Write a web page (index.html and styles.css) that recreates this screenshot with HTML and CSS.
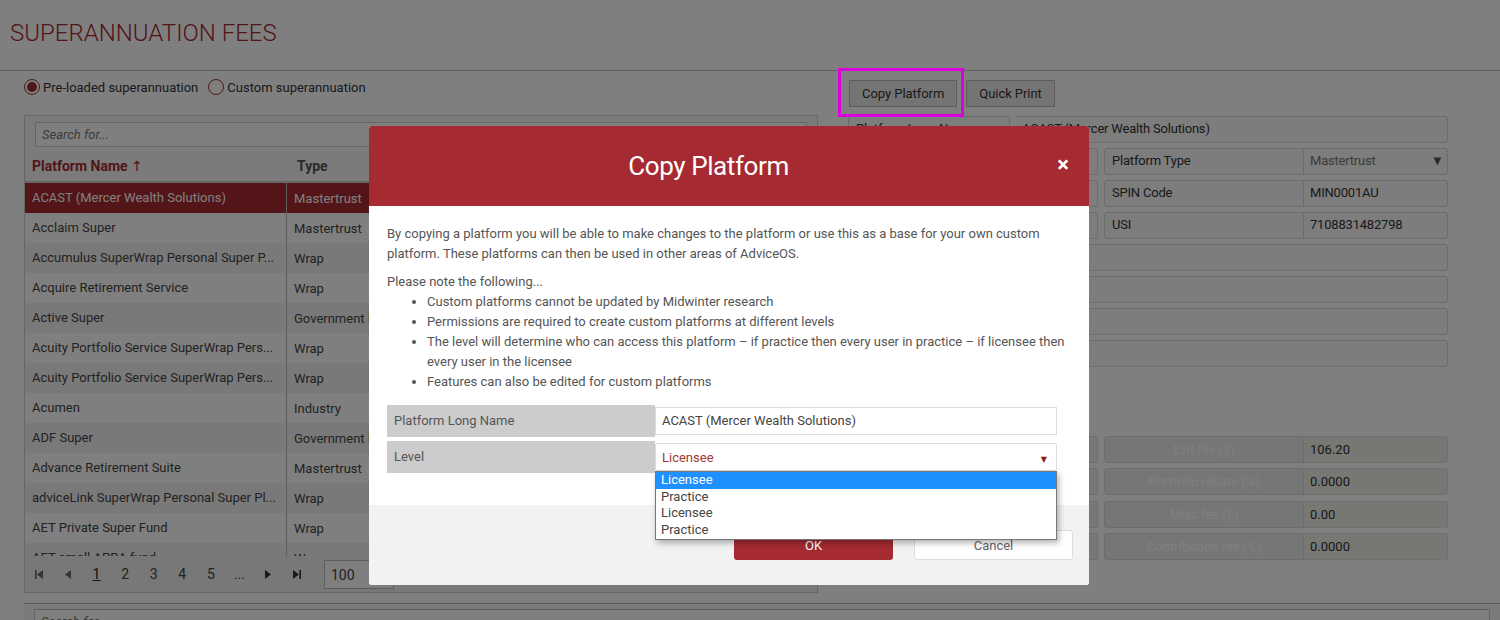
FILE: index.html
```html
<!DOCTYPE html>
<html>
<head>
<meta charset="utf-8">
<link rel="stylesheet" href="styles.css">
</head>
<body>
<div class="page">
  <header class="page-head"><h1>SUPERANNUATION FEES</h1></header>
  <div class="content">
    <div class="left">
      <div class="radios">
        <label class="radio on"><span class="dot"></span>Pre-loaded superannuation</label>
        <label class="radio"><span class="dot"></span>Custom superannuation</label>
      </div>
      <div class="grid">
        <div class="grid-search"><div class="search">Search for...</div></div>
        <div class="grid-head">
          <div class="c1">Platform Name <span class="arrow">↑</span></div>
          <div class="c2">Type</div>
        </div>
        <div class="grid-body">
          <div class="row sel"><div class="c1">ACAST (Mercer Wealth Solutions)</div><div class="c2">Mastertrust</div></div>
          <div class="row"><div class="c1">Acclaim Super</div><div class="c2">Mastertrust</div></div>
          <div class="row alt"><div class="c1">Accumulus SuperWrap Personal Super P...</div><div class="c2">Wrap</div></div>
          <div class="row"><div class="c1">Acquire Retirement Service</div><div class="c2">Wrap</div></div>
          <div class="row alt"><div class="c1">Active Super</div><div class="c2">Government Industry</div></div>
          <div class="row"><div class="c1">Acuity Portfolio Service SuperWrap Pers...</div><div class="c2">Wrap</div></div>
          <div class="row alt"><div class="c1">Acuity Portfolio Service SuperWrap Pers...</div><div class="c2">Wrap</div></div>
          <div class="row"><div class="c1">Acumen</div><div class="c2">Industry</div></div>
          <div class="row alt"><div class="c1">ADF Super</div><div class="c2">Government Industry</div></div>
          <div class="row"><div class="c1">Advance Retirement Suite</div><div class="c2">Mastertrust</div></div>
          <div class="row alt"><div class="c1">adviceLink SuperWrap Personal Super Pl...</div><div class="c2">Wrap</div></div>
          <div class="row"><div class="c1">AET Private Super Fund</div><div class="c2">Wrap</div></div>
          <div class="row alt"><div class="c1">AET small APRA fund</div><div class="c2">Wrap</div></div>
        </div>
        <div class="pager">
          <span class="pg-ico"><svg width="9" height="9" viewBox="0 0 9 9"><rect x="0" y="0" width="1.6" height="9" fill="#666"/><path d="M8 0 L2 4.5 L8 9 Z" fill="#666"/></svg></span>
          <span class="pg-ico"><svg width="8" height="9" viewBox="0 0 8 9"><path d="M7 0 L1 4.5 L7 9 Z" fill="#666"/></svg></span>
          <span class="pg-num cur">1</span>
          <span class="pg-num">2</span>
          <span class="pg-num">3</span>
          <span class="pg-num">4</span>
          <span class="pg-num">5</span>
          <span class="pg-num">...</span>
          <span class="pg-ico"><svg width="8" height="9" viewBox="0 0 8 9"><path d="M1 0 L7 4.5 L1 9 Z" fill="#333"/></svg></span>
          <span class="pg-ico"><svg width="9" height="9" viewBox="0 0 9 9"><path d="M1 0 L7 4.5 L1 9 Z" fill="#333"/><rect x="7.4" y="0" width="1.6" height="9" fill="#333"/></svg></span>
          <span class="pg-size">100</span>
        </div>
      </div>
    </div>
    <div class="right">
      <div class="toolbar">
        <button class="btn">Copy Platform</button>
        <button class="btn">Quick Print</button>
        <span class="highlight"></span>
      </div>
      <div class="form">
        <div class="frow full"><div class="lbl w162">Platform Long Name</div><div class="val">ACAST (Mercer Wealth Solutions)</div></div>
        <div class="frow"><div class="half"><div class="lbl">Platform Short Name</div><div class="val">ACAST</div></div><div class="half"><div class="lbl">Platform Type</div><div class="val sel-val">Mastertrust<span class="tri">▼</span></div></div></div>
        <div class="frow"><div class="half"><div class="lbl">Platform Code</div><div class="val">ACAST</div></div><div class="half"><div class="lbl">SPIN Code</div><div class="val">MIN0001AU</div></div></div>
        <div class="frow"><div class="half"><div class="lbl">ABN</div><div class="val"></div></div><div class="half"><div class="lbl">USI</div><div class="val">7108831482798</div></div></div>
        <div class="frow full"><div class="val"></div></div>
        <div class="frow full"><div class="val"></div></div>
        <div class="frow full"><div class="val"></div></div>
        <div class="frow full"><div class="val"></div></div>
      </div>
      <div class="fees">
        <div class="frow"><div class="half"><div class="flbl">Entry fee ($)</div><div class="fval">0.00</div></div><div class="half"><div class="flbl">Exit fee ($)</div><div class="fval">106.20</div></div></div>
        <div class="frow"><div class="half"><div class="flbl">Admin fee (%)</div><div class="fval">0.0000</div></div><div class="half"><div class="flbl">Portfolio rebate (%)</div><div class="fval">0.0000</div></div></div>
        <div class="frow"><div class="half"><div class="flbl">Switch fee ($)</div><div class="fval">0.00</div></div><div class="half"><div class="flbl">Misc fee ($)</div><div class="fval">0.00</div></div></div>
        <div class="frow"><div class="half"><div class="flbl">Withdrawal fee ($)</div><div class="fval">0.00</div></div><div class="half"><div class="flbl">Contribution fee (%)</div><div class="fval">0.0000</div></div></div>
      </div>
    </div>
  </div>
  <div class="bottom-panel"><div class="search">Search for...</div></div>
</div>

<div class="overlay"></div>

<div class="modal">
  <div class="modal-head">
    <h2>Copy Platform</h2>
    <span class="close">×</span>
  </div>
  <div class="modal-body">
    <p>By copying a platform you will be able to make changes to the platform or use this as a base for your own custom platform. These platforms can then be used in other areas of AdviceOS.</p>
    <p class="note">Please note the following...</p>
    <ul>
      <li>Custom platforms cannot be updated by Midwinter research</li>
      <li>Permissions are required to create custom platforms at different levels</li>
      <li>The level will determine who can access this platform – if practice then every user in practice – if licensee then every user in the licensee</li>
      <li>Features can also be edited for custom platforms</li>
    </ul>
    <div class="mform">
      <div class="mrow"><div class="mlbl">Platform Long Name</div><div class="mfield"><div class="minput">ACAST (Mercer Wealth Solutions)</div></div></div>
      <div class="mrow"><div class="mlbl">Level</div><div class="mfield"><div class="minput mselect">Licensee<span class="mtri">▼</span></div>
        <div class="dropdown">
          <div class="opt on">Licensee</div>
          <div class="opt">Practice</div>
          <div class="opt">Licensee</div>
          <div class="opt">Practice</div>
        </div>
      </div></div>
    </div>
  </div>
  <div class="modal-foot">
    <button class="ok">OK</button>
    <button class="cancel">Cancel</button>
  </div>
</div>
</body>
</html>
```

FILE: styles.css
```css
* { box-sizing: border-box; }
html, body { margin: 0; padding: 0; }
body {
  font-family: Roboto, "Noto Sans", "DejaVu Sans", sans-serif;
  font-size: 13px;
  color: #444;
  background: #fff;
  width: 1500px;
  height: 620px;
  overflow: hidden;
  position: relative;
}
.page-head {
  height: 71px;
  border-bottom: 1px solid #bbb;
  padding: 19px 0 0 10px;
}
.page-head h1 {
  margin: 0;
  font-size: 24px;
  line-height: 28px;
  font-weight: 300;
  color: #a52a32;
}
.content {
  display: flex;
  padding-left: 24px;
}
.left { width: 794px; }
.radios {
  display: flex;
  gap: 10px;
  height: 44px;
  padding-top: 5px;
}
.radio {
  display: flex;
  align-items: center;
  height: 22px;
  color: #333;
  font-size: 13px;
}
.dot {
  width: 16px;
  height: 16px;
  border-radius: 50%;
  border: 1px solid #a52a32;
  margin-right: 3px;
  position: relative;
}
.radio.on .dot::after {
  content: "";
  position: absolute;
  left: 2px; top: 2px;
  width: 10px; height: 10px;
  border-radius: 50%;
  background: #a52a32;
}
.grid {
  border: 1px solid #ccc;
  height: 478px;
  display: flex;
  flex-direction: column;
}
.grid-search {
  padding: 6px 10px 3px 10px;
  background: #f6f6f6;
}
.search {
  height: 25px;
  border: 1px solid #ccc;
  background: #fff;
  font-style: italic;
  color: #777;
  padding: 4px 6px;
  font-size: 13px;
}
.grid-head {
  display: flex;
  height: 33px;
  border-bottom: 2px solid #ccc;
  align-items: center;
  font-weight: 700;
  font-size: 14px;
  color: #a52a32;
  background: #f6f6f6;
}
.grid-head .c1 { width: 262px; padding-left: 7px; }
.grid-head .c2 { padding-left: 10px; color: #555; }
.arrow { font-weight: 400; }
.grid-body {
  height: 373px;
  overflow: hidden;
}
.row {
  display: flex;
  height: 30px;
  align-items: center;
  background: #fff;
  color: #444;
}
.row.alt { background: #f3f3f3; }
.row.sel { background: #a82a32; color: #fff; }
.row .c1 { width: 262px; padding-left: 7px; border-right: 1px solid #bbb; height: 30px; line-height: 30px; white-space: nowrap; overflow: hidden; }
.row .c2 { padding-left: 7px; }
.pager {
  flex: 1;
  display: flex;
  align-items: center;
  background: #f0f0f0;
  padding-left: 0;
  color: #444;
  font-size: 14px;
}
.pg-ico, .pg-num {
  width: 28.6px;
  display: flex;
  justify-content: center;
  align-items: center;
}
.pg-num.cur { text-decoration: underline; color: #222; }
.pg-size {
  margin-left: 13px;
  width: 70px;
  height: 29px;
  border: 1px solid #bbb;
  background: #fff;
  padding: 6px 0 0 6px;
}
.right {
  margin-left: 20px;
  width: 620px;
}
.toolbar {
  display: flex;
  gap: 9px;
  padding: 9px 0 0 11px;
  height: 45px;
}
.btn {
  height: 27px;
  border: 1px solid #bbb;
  background: #e9e9e9;
  font-family: Roboto, sans-serif;
  font-size: 13px;
  color: #333;
  padding: 0 12px;
  letter-spacing: -0.05px;
}
.highlight {
  position: absolute;
  left: 838px; top: 68px;
  width: 126px; height: 49px;
  border: 3px solid #dd00dd;
  z-index: 6;
}
.form, .fees { padding-left: 10px; width: 610px; }
.frow {
  display: flex;
  gap: 6px;
  margin-bottom: 5px;
}
.half { display: flex; width: 250px; }
.half + .half { width: 344px; }
.lbl {
  width: 200px;
  height: 27px;
  border: 1px solid #d8d8d8;
  border-radius: 3px 0 0 3px;
  padding: 4px 7px;
  color: #333;
  letter-spacing: -0.2px;
  background: #fafafa;
}
.half:first-child .lbl { width: 130px; }
.lbl.w162 { width: 162px; }
.val {
  flex: 1;
  height: 27px;
  border: 1px solid #d8d8d8;
  border-left: none;
  border-radius: 0 3px 3px 0;
  padding: 4px 6px;
  color: #333;
  letter-spacing: -0.2px;
  background: #fafafa;
}
.full .val:only-child { border-left: 1px solid #d8d8d8; border-radius: 3px; }
.sel-val { color: #777; display: flex; justify-content: space-between; }
.tri { font-size: 10px; color: #555; padding-top: 2px; }
.fees { margin-top: 69px; }
.fees .frow { margin-bottom: 5.3px; }
.flbl {
  width: 200px;
  height: 27px;
  border: 1px solid #d8d8d8;
  padding: 5px 7px;
  text-align: center;
  color: #fff;
  background: #ececec;
  border-radius: 3px 0 0 3px;
}
.half:first-child .flbl { width: 130px; }
.fval {
  flex: 1;
  height: 27px;
  border: 1px solid #e0e0d8;
  border-left: none;
  background: #eeeee6;
  padding: 5px 6px;
  color: #333;
  border-radius: 0 3px 3px 0;
}
.bottom-panel {
  position: absolute;
  left: 24px; top: 603px;
  right: 0;
  border-top: 1px solid #bbb;
  background: #f6f6f6;
  padding: 5px 10px;
}
.bottom-panel .search { border-top: 1px solid #bbb; }
.overlay {
  position: fixed;
  inset: 0;
  background: rgba(0,0,0,0.5);
  z-index: 5;
}
.modal {
  position: absolute;
  left: 369px;
  top: 126px;
  width: 720px;
  border-radius: 3px;
  background: #f2f2f2;
  z-index: 10;
}
.modal-head {
  height: 80px;
  background: #a52a32;
  display: flex;
  align-items: center;
  justify-content: center;
  position: relative;
  padding-right: 41px;
  border-radius: 3px 3px 0 0;
}
.modal-head h2 {
  margin: 0;
  font-size: 26px;
  font-weight: 400;
  color: #fff;
  letter-spacing: -0.4px;
}
.close {
  position: absolute;
  right: 20px;
  top: 26px;
  color: #fff;
  font-size: 22px;
  font-weight: 700;
  line-height: 26px;
}
.modal-body {
  background: #fff;
  padding: 18px 14px 32px 18px;
  color: #555;
  font-size: 13px;
  line-height: 20px;
}
.modal-body p { margin: 0 0 8px; }
.modal-body p.note { margin: 0; }
.modal-body ul { margin: 0; padding-left: 40px; }
.mform { margin-top: 13px; margin-right: 18px; }
.mrow { display: flex; margin-bottom: 4px; }
.mrow:last-child { margin-bottom: 0; }
.mlbl {
  width: 268px;
  height: 32px;
  background: #cccccc;
  padding: 6px 7px;
  color: #555;
}
.mfield {
  flex: 1;
  display: flex;
  align-items: center;
  position: relative;
}
.minput {
  width: 100%;
  height: 28px;
  border: 1px solid #ddd;
  padding: 3px 6px;
  color: #444;
  background: #fff;
}
.mselect {
  color: #a03a32;
  display: flex;
  justify-content: space-between;
  padding-top: 4px;
  padding-right: 9px;
  border-radius: 2px;
}
.mtri { color: #8b1a1a; font-size: 8px; padding-top: 2px; }
.dropdown {
  position: absolute;
  left: 0; right: 0;
  top: 30px;
  background: #fff;
  border: 1px solid #777;
  box-shadow: 2px 3px 6px rgba(0,0,0,0.3);
  z-index: 5;
  padding-bottom: 1px;
}
.opt {
  height: 16.5px;
  line-height: 16px;
  padding-left: 5px;
  color: #444;
  font-size: 13px;
}
.opt.on { background: #1e90ff; color: #fff; }
.modal-foot {
  height: 80px;
  background: #f2f2f2;
  display: flex;
  justify-content: flex-end;
  gap: 21px;
  padding: 25px 16px 0 0;
  border-radius: 0 0 3px 3px;
}
.modal-foot button {
  width: 159px;
  height: 30px;
  font-family: Roboto, sans-serif;
  font-size: 13px;
  border-radius: 3px;
}
.ok { background: #a52a32; color: #fff; border: none; }
.cancel { background: #fff; border: 1px solid #ddd; color: #666; }
```
